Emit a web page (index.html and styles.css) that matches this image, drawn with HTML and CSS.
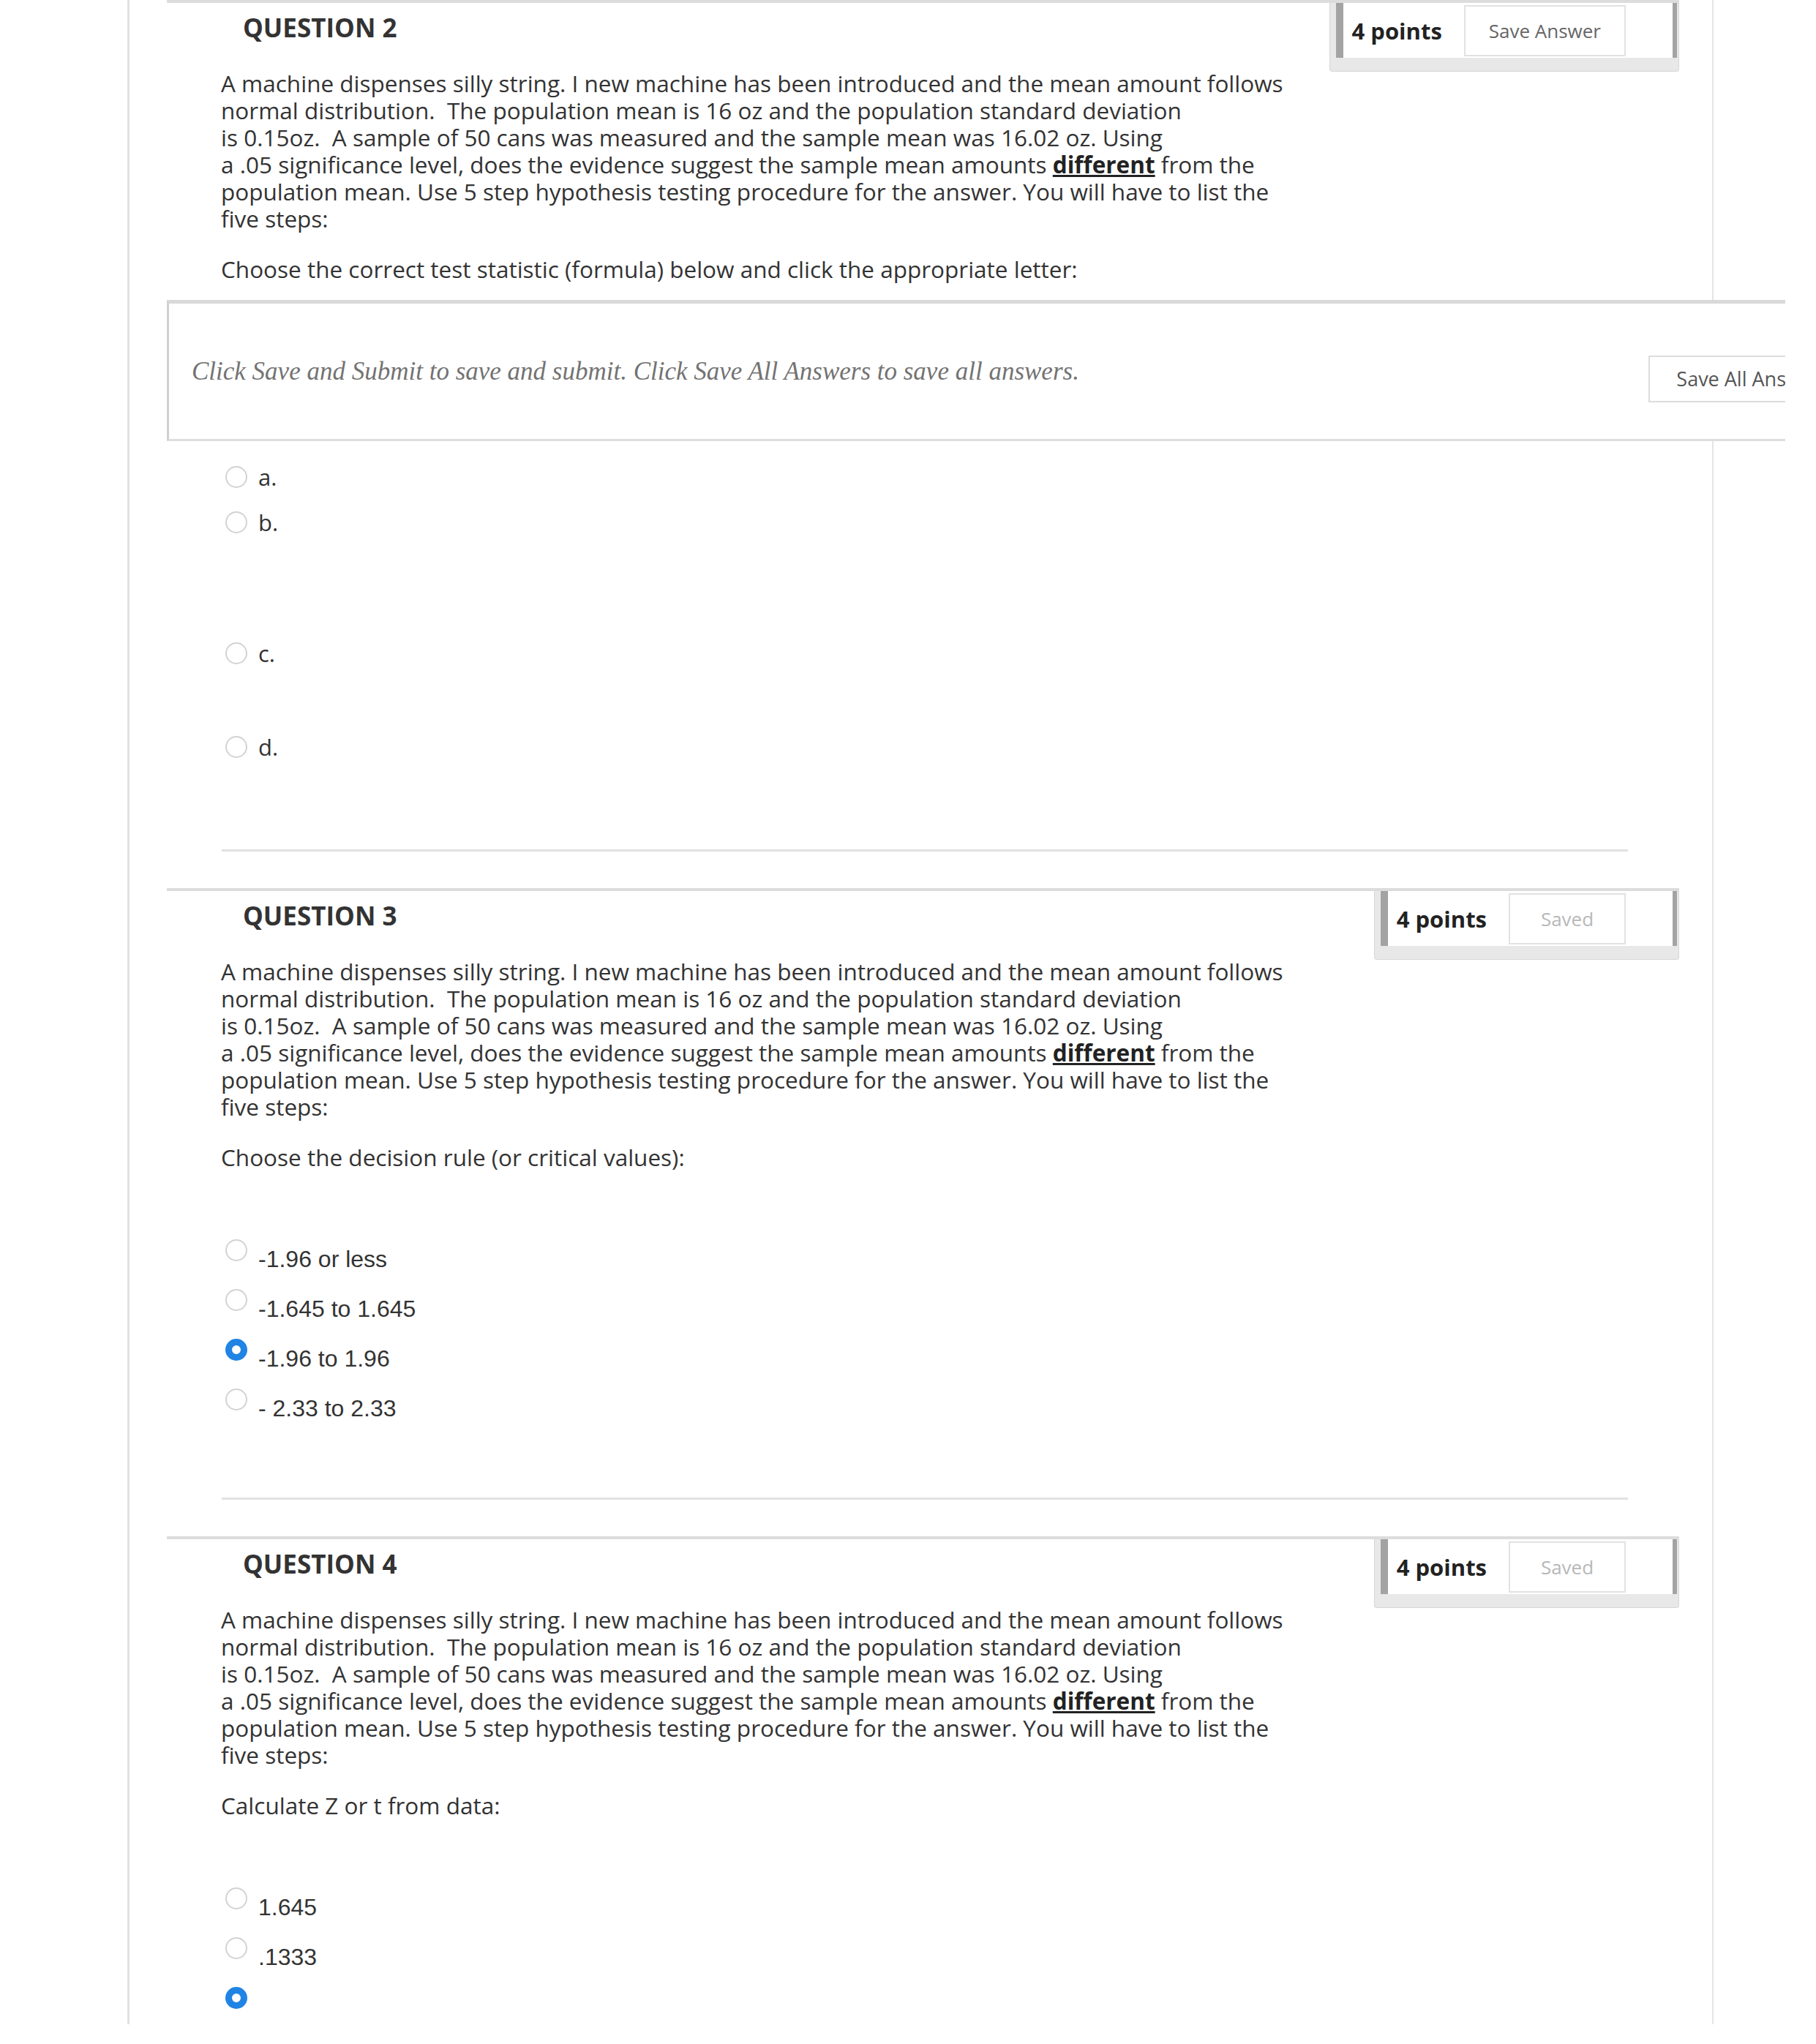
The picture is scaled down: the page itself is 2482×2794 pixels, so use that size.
FILE: index.html
```html
<!DOCTYPE html>
<html lang="en">
<head>
    <meta charset="UTF-8">
    <title>Test</title>
    <link rel="stylesheet" href="styles.css">
</head>
<body>
    <div class="page">

        <!-- Question 2 -->
        <section class="question">
            <div class="q-top">
                <h3 class="q-title">QUESTION 2</h3>
                <div class="points">
                    <div class="points-inner">
                        <span class="points-value">4 points</span>
                        <button class="points-btn save">Save Answer</button>
                    </div>
                </div>
            </div>
            <p class="q-text">
                A machine dispenses silly string. I new machine has been introduced and the mean amount follows<br>
                normal distribution.&nbsp; The population mean is 16 oz and the population standard deviation<br>
                is 0.15oz.&nbsp; A sample of 50 cans was measured and the sample mean was 16.02 oz. Using<br>
                a .05 significance level, does the evidence suggest the sample mean amounts <b><u>different</u></b> from the<br>
                population mean. Use 5 step hypothesis testing procedure for the answer. You will have to list the<br>
                five steps:
            </p>
            <p class="q-prompt">Choose the correct test statistic (formula) below and click the appropriate letter:</p>

            <div class="instructions">
                <span class="instructions-text">Click Save and Submit to save and submit. Click Save All Answers to save all answers.</span>
                <button class="save-all">Save All Answers</button>
            </div>

            <div class="choices choices-letters">
                <label class="option"><span class="radio"></span><span class="opt-letter">a.</span></label>
                <label class="option"><span class="radio"></span><span class="opt-letter">b.</span></label>
                <div class="formula formula-b"></div>
                <label class="option"><span class="radio"></span><span class="opt-letter">c.</span></label>
                <div class="formula formula-c"></div>
                <label class="option"><span class="radio"></span><span class="opt-letter">d.</span></label>
                <div class="formula formula-d"></div>
            </div>
            <div class="q-sep"></div>
        </section>

        <!-- Question 3 -->
        <section class="question">
            <div class="q-top">
                <h3 class="q-title">QUESTION 3</h3>
                <div class="points">
                    <div class="points-inner">
                        <span class="points-value">4 points</span>
                        <button class="points-btn">Saved</button>
                    </div>
                </div>
            </div>
            <p class="q-text">
                A machine dispenses silly string. I new machine has been introduced and the mean amount follows<br>
                normal distribution.&nbsp; The population mean is 16 oz and the population standard deviation<br>
                is 0.15oz.&nbsp; A sample of 50 cans was measured and the sample mean was 16.02 oz. Using<br>
                a .05 significance level, does the evidence suggest the sample mean amounts <b><u>different</u></b> from the<br>
                population mean. Use 5 step hypothesis testing procedure for the answer. You will have to list the<br>
                five steps:
            </p>
            <p class="q-prompt">Choose the decision rule (or critical values):</p>

            <div class="choices">
                <label class="option"><span class="radio"></span><span class="opt-label">-1.96 or less</span></label>
                <label class="option"><span class="radio"></span><span class="opt-label">-1.645 to 1.645</span></label>
                <label class="option"><span class="radio checked"></span><span class="opt-label">-1.96 to 1.96</span></label>
                <label class="option"><span class="radio"></span><span class="opt-label">- 2.33 to 2.33</span></label>
            </div>
            <div class="q-sep"></div>
        </section>

        <!-- Question 4 -->
        <section class="question">
            <div class="q-top">
                <h3 class="q-title">QUESTION 4</h3>
                <div class="points">
                    <div class="points-inner">
                        <span class="points-value">4 points</span>
                        <button class="points-btn">Saved</button>
                    </div>
                </div>
            </div>
            <p class="q-text">
                A machine dispenses silly string. I new machine has been introduced and the mean amount follows<br>
                normal distribution.&nbsp; The population mean is 16 oz and the population standard deviation<br>
                is 0.15oz.&nbsp; A sample of 50 cans was measured and the sample mean was 16.02 oz. Using<br>
                a .05 significance level, does the evidence suggest the sample mean amounts <b><u>different</u></b> from the<br>
                population mean. Use 5 step hypothesis testing procedure for the answer. You will have to list the<br>
                five steps:
            </p>
            <p class="q-prompt">Calculate Z or t from data:</p>

            <div class="choices">
                <label class="option"><span class="radio"></span><span class="opt-label">1.645</span></label>
                <label class="option"><span class="radio"></span><span class="opt-label">.1333</span></label>
                <label class="option"><span class="radio checked"></span><span class="opt-label"></span></label>
            </div>
        </section>

    </div>
</body>
</html>
```

FILE: styles.css
```css
:root {
    --text: #333;
    --line: #dedede;
    --bar: #a3a3a3;
    --radio-on: #1f84e4;
}

body {
    margin: 0;
    background: #fff;
    font-family: "Open Sans", "Liberation Sans", sans-serif;
    color: var(--text);
}

.page {
    margin-left: 174px;
    width: 2067px;
    border-left: 3px solid #e2e2e2;
    border-right: 2px solid #e4e4e4;
    padding: 0 45px 0 51px;
}

.question {
    border-top: 4px solid #dcdcdc;
}

.q-top {
    display: flex;
    justify-content: space-between;
    align-items: flex-start;
}

.q-title {
    margin: 0;
    padding: 14px 0 0 104px;
    font-size: 35px;
    line-height: 40px;
    font-weight: bold;
    color: #333;
}

/* points + save button box */
.points {
    flex: none;
    margin-bottom: -31px;
    background: #e8e8e8;
    padding: 0 2px 18px 8px;
    border: 1px solid #d6d6d6;
    border-top: 0;
    border-radius: 0 0 4px 4px;
}

.points-inner {
    display: flex;
    align-items: center;
    height: 75px;
    background: #fff;
    border-left: 10px solid var(--bar);
    border-right: 6px solid var(--bar);
    padding: 0 64px 0 12px;
}

.points-value {
    font-size: 31px;
    font-weight: bold;
    color: #222;
    margin-right: 30px;
}

.points-btn {
    height: 70px;
    min-width: 160px;
    padding: 0 32px;
    border: 2px solid #e2e2e2;
    background: #fff;
    font-family: "Open Sans", sans-serif;
    font-size: 26px;
    color: #b8b8b8;
}

.points-btn.save {
    color: #666;
}

.q-text {
    margin: 28px 0 0 74px;
    font-size: 31.5px;
    line-height: 37px;
    white-space: nowrap;
}

.q-text b {
    color: #222;
}

.q-prompt {
    margin: 32px 0 0 74px;
    font-size: 31.5px;
    line-height: 37px;
}

.instructions {
    display: flex;
    align-items: center;
    justify-content: space-between;
    box-sizing: border-box;
    height: 193px;
    margin: 24px -145px 0 0;
    padding-left: 31px;
    background: #fff;
    border-top: 5px solid #d9d9d9;
    border-bottom: 3px solid #dedede;
    border-left: 3px solid #d0d0d0;
    overflow: hidden;
}

.instructions-text {
    font-family: "Liberation Serif", serif;
    font-style: italic;
    font-size: 35px;
    color: #737373;
}

.save-all {
    flex: none;
    margin: 20px -99px 0 0;
    height: 64px;
    padding: 0 36px;
    border: 2px solid #dcdcdc;
    background: #fff;
    font-family: "Open Sans", sans-serif;
    font-size: 27px;
    color: #555;
}

.choices {
    display: flow-root;
    margin-top: 94px;
    padding-left: 80px;
}

.choices-letters {
    margin-top: 31px;
}

.option {
    display: flex;
    align-items: flex-start;
    gap: 15px;
    margin-bottom: 21px;
}

.choices-letters .option {
    align-items: center;
    margin-bottom: 26px;
}

.radio {
    flex: none;
    box-sizing: border-box;
    width: 30px;
    height: 30px;
    border-radius: 50%;
    border: 2px solid #d3d3d3;
    background: #fff;
}

.radio.checked {
    border: 9px solid var(--radio-on);
}

.opt-label {
    margin-top: 7px;
    font-family: "Liberation Sans", Arial, sans-serif;
    font-size: 32px;
    line-height: 40px;
    color: #333;
}

.opt-letter {
    font-size: 31px;
    line-height: 36px;
}

.formula-b { height: 117px; }
.formula-c { height: 66px; }
.formula-d { height: 15px; }

.q-sep {
    height: 3px;
    background: #e2e2e2;
    margin: 81px 70px 50px 75px;
}
```
